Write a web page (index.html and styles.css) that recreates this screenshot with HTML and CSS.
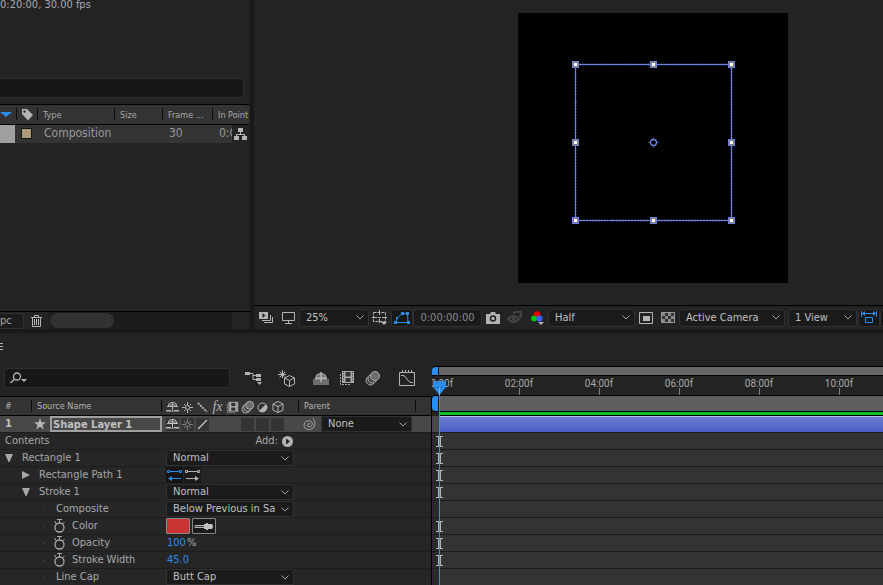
FILE: index.html
```html
<!DOCTYPE html>
<html lang="en">
<head>
  <meta charset="UTF-8">
  <meta name="viewport" content="width=device-width, initial-scale=1.0">
  <title>Shape Layer 1</title>
  <link rel="stylesheet" href="styles.css">
</head>
<body>
  <!-- shared icons -->
  <svg class="defs" aria-hidden="true">
    <symbol id="i-shy" viewBox="0 0 13 12">
      <path d="M2.500 5V3.500Q3 1.500 6.500 1.500T10.500 3.500V5M1 5.500h11M6.500 1v9" fill="none" stroke="currentColor"/>
      <path d="M3 3h7v3H3z" fill="currentColor" opacity=".5"/>
      <path d="M0 9h5v1h3V9h5v1.500H0z" fill="currentColor"/>
    </symbol>
    <symbol id="i-sun" viewBox="0 0 13 13">
      <circle cx="6.500" cy="6.500" r="2" fill="none" stroke="currentColor"/>
      <path d="M6.500 1v3M6.500 9v3M1 6.500h3M9 6.500h3M3 3l1.500 1.500M10 3L8.500 4.500M3 10l1.500-1.500M10 10L8.500 8.500" stroke="currentColor"/>
    </symbol>
    <symbol id="i-film" viewBox="0 0 16 16">
      <path d="M1.500 4v10.500H12" fill="none" stroke="currentColor" stroke-dasharray="2 1"/>
      <path d="M3 1h12v12H3z" fill="currentColor"/>
      <path d="M6.500 2h5v4.500h-5zM6.500 8h5v4h-5z" fill="#333"/>
      <path d="M4.500 2v10M13.500 2v10" stroke="#333" stroke-dasharray="1 1.500"/>
    </symbol>
    <symbol id="i-blur" viewBox="0 0 16 16">
      <circle cx="5.500" cy="10.500" r="4.500" fill="#444" stroke="currentColor"/>
      <circle cx="7.500" cy="8.500" r="4.500" fill="#444" stroke="currentColor"/>
      <circle cx="10" cy="6" r="4.500" fill="#6c6c6c" stroke="currentColor"/>
    </symbol>
    <symbol id="i-cube" viewBox="0 0 12 12">
      <path d="M6 .5l5 2.500v6L6 11.500 1 9V3zM1 3l5 2.500L11 3M6 5.500v6" fill="none" stroke="currentColor"/>
    </symbol>
    <symbol id="i-watch" viewBox="0 0 13 14">
      <circle cx="6.500" cy="8.500" r="4.500" fill="none" stroke="currentColor" stroke-width="1.300"/>
      <path d="M4 .5h5M6.500 1v3M1.500 2l2 3M11.500 3l-2 2" fill="none" stroke="currentColor"/>
    </symbol>
    <symbol id="i-down" viewBox="0 0 8 8"><path d="M0 0h8L4.500 8h-1z" fill="currentColor"/></symbol>
    <symbol id="i-right" viewBox="0 0 8 8"><path d="M0 0l8 4-8 4z" fill="currentColor"/></symbol>
    <symbol id="i-key" viewBox="0 0 7 11"><path d="M0 .5h7M0 10.500h7M2.500 1v9M4.500 1v9" stroke="#b4b4b4" fill="none"/></symbol>
  </svg>

  <main class="workspace">
    <section class="project">
      <p class="comp-info">0:20:00, 30.00 fps</p>
      <input class="project-search" type="text" aria-label="Search project">
      <table class="project-table">
        <colgroup>
          <col class="c-name"><col class="c-tag"><col class="c-type"><col class="c-size"><col class="c-rate"><col class="c-in"><col class="c-flow">
        </colgroup>
        <thead>
          <tr>
            <th class="sort"><svg width="12" height="5"><path d="M0 0h12L6 5z" fill="#2d8ceb"/></svg></th>
            <th class="tag"><svg width="13" height="13"><path d="M1 1h5l6 6-5 5.500L1 6z" fill="#b4b4b4"/><circle cx="3.500" cy="3.500" r="1.200" fill="#333"/></svg></th>
            <th>Type</th>
            <th>Size</th>
            <th>Frame ...</th>
            <th colspan="2">In Point</th>
          </tr>
        </thead>
        <tbody>
          <tr>
            <td class="picked"></td>
            <td class="tag"><span class="swatch"></span></td>
            <td>Composition</td>
            <td></td>
            <td>30</td>
            <td>0:00</td>
            <td class="flow"><svg width="13" height="12" fill="#b4b4b4"><path d="M4 0h5v4H4zM0 8h5v4H0zM8 8h5v4H8z"/><path d="M6 4h1v2h4v2h-1V7H3v1H2V6h4z"/></svg></td>
          </tr>
        </tbody>
      </table>
      <div class="project-foot">
        <button class="depth" type="button">pc</button>
        <button class="icon-btn trash" type="button" aria-label="Delete">
          <svg width="11" height="12"><path d="M0 2.500h11M3.500 2V.5h4V2M1.500 3v8.500h8V3M3.500 4v6M5.500 4v6M7.500 4v6" fill="none" stroke="#b4b4b4"/></svg>
        </button>
        <div class="scroll"><span class="thumb"></span></div>
      </div>
    </section>

    <section class="viewer">
      <div class="stage">
        <svg class="comp" width="270" height="270" shape-rendering="crispEdges">
          <rect width="270" height="270" fill="#000"/>
          <rect x="57.500" y="51.500" width="156" height="156" fill="none" stroke="#1c2140" stroke-width="3" stroke-dasharray="2 1"/>
          <rect x="57.500" y="51.500" width="156" height="156" fill="none" stroke="#6b82dc"/>
          <g class="handles">
            <rect x="54" y="48" width="7" height="7"/><rect x="132" y="48" width="7" height="7"/><rect x="210" y="48" width="7" height="7"/>
            <rect x="54" y="126" width="7" height="7"/><rect x="210" y="126" width="7" height="7"/>
            <rect x="54" y="204" width="7" height="7"/><rect x="132" y="204" width="7" height="7"/><rect x="210" y="204" width="7" height="7"/>
          </g>
          <path d="M55 49h5v5h-5zM133 49h5v5h-5zM211 49h5v5h-5zM55 127h5v5h-5zM211 127h5v5h-5zM55 205h5v5h-5zM133 205h5v5h-5zM211 205h5v5h-5z" fill="#8a8370"/>
          <path d="M56 50h3v3h-3zM134 50h3v3h-3zM212 50h3v3h-3zM56 128h3v3h-3zM212 128h3v3h-3zM56 206h3v3h-3zM134 206h3v3h-3zM212 206h3v3h-3z" fill="#fff"/>
          <g fill="none" stroke="#6b82dc" shape-rendering="auto">
            <circle cx="135.500" cy="129.500" r="3" stroke-width="1.300"/>
            <path d="M135.500 124v2M135.500 133v2M130 129.500h2M139 129.500h2" stroke="#46549a"/>
          </g>
        </svg>
      </div>
      <div class="viewer-bar">
        <button class="icon-btn" type="button" aria-label="Always preview this view"><svg width="14" height="12"><path d="M0 0h9v7H0z" fill="#b4b4b4"/><path d="M3.500 1l3 2.500-3 2.500z" fill="#232323"/><path d="M3 8.500h8.500V3M5 10.500h8.500V5" fill="none" stroke="#b4b4b4"/></svg></button>
        <button class="icon-btn" type="button" aria-label="Primary viewer"><svg width="13" height="12"><path d="M.5.5h12v8H.5zM6.500 9v2M3 11.500h7" fill="none" stroke="#b4b4b4"/></svg></button>
        <select class="field zoom" aria-label="Magnification"><option>25%</option></select>
        <button class="icon-btn" type="button" aria-label="Grid and guides"><svg width="16" height="15"><path d="M1.500 2.500h12v9H1.500z" fill="none" stroke="#b4b4b4" stroke-dasharray="3 1"/><path d="M7.500 0v5M7.500 9v4M0 7.500h5M10 7.500h5M6 7.500h3" stroke="#b4b4b4"/><path d="M9 12h6l-3 3z" fill="#b4b4b4"/></svg></button>
        <button class="icon-btn boxed" type="button" aria-label="Toggle mask visibility"><svg width="16" height="12"><path d="M1.500 10.500L3 6l5.500-4.500h5l.5 9z" fill="none" stroke="#2d8ceb"/><path d="M0 9h3v3H0zM13 9h3v3h-3zM12 0h3v3h-3zM7 0h3v3H7zM2 5h2v2H2z" fill="#2d8ceb"/></svg></button>
        <button class="field timecode" type="button">0:00:00:00</button>
        <button class="icon-btn" type="button" aria-label="Take snapshot"><svg width="14" height="12"><path d="M0 2h4l1-2h4l1 2h4v10H0z" fill="#b4b4b4"/><circle cx="7" cy="6.500" r="2.500" fill="#b4b4b4" stroke="#232323" stroke-width="1.500"/></svg></button>
        <button class="icon-btn" type="button" aria-label="Show snapshot"><svg width="16" height="13"><path d="M1 8q5-6 11 0-5 6-11 0z" fill="none" stroke="#444" stroke-width="2"/><circle cx="6.500" cy="8" r="2" fill="#444"/><path d="M6 2q4-2 8-1v5l-2-1" fill="none" stroke="#444" stroke-width="2"/></svg></button>
        <button class="icon-btn" type="button" aria-label="Show channel"><svg width="13" height="14"><circle cx="6" cy="3.500" r="3.300" fill="#f00000"/><circle cx="3" cy="7.500" r="3" fill="#00c800"/><circle cx="8.500" cy="7.500" r="3" fill="#3c64ff"/><path d="M7 11h6l-3 3z" fill="#b4b4b4"/></svg></button>
        <select class="field res" aria-label="Resolution"><option>Half</option></select>
        <button class="icon-btn" type="button" aria-label="Region of interest"><svg width="14" height="12"><path d="M.5.5h13v11H.5z" fill="none" stroke="#b4b4b4"/><path d="M4 4h7v5H4z" fill="#b4b4b4"/></svg></button>
        <button class="icon-btn" type="button" aria-label="Toggle transparency grid"><svg width="14" height="11"><path d="M.5.5h13v10H.5z" fill="#333" stroke="#9a9a9a"/><path d="M1 1h3v3H1zM7 1h3v3H7zM4 4h3v3H4zM10 4h3v3h-3zM1 7h3v3H1zM7 7h3v3H7z" fill="#888"/></svg></button>
        <select class="field camera" aria-label="3D view"><option>Active Camera</option></select>
        <select class="field views" aria-label="View layout"><option>1 View</option></select>
        <button class="icon-btn boxed" type="button" aria-label="Pixel aspect ratio"><svg width="16" height="13"><path d="M1 2.500h14M.5 0v6M15.500 0v6M4.500 6.500h7v5h-7z" fill="none" stroke="#2d8ceb"/><path d="M1 2.500L4 0v5zM15 2.500L12 0v5z" fill="#2d8ceb"/></svg></button>
        <button class="icon-btn boxed" type="button" aria-label="Fast previews"></button>
      </div>
    </section>
  </main>

  <section class="timeline">
    <div class="layers">
      <div class="tab-strip">
        <button class="icon-btn" type="button" aria-label="Panel menu"><svg width="3" height="7"><path d="M0 .5h3M0 3.500h3M0 6.500h3" stroke="#b4b4b4"/></svg></button>
      </div>
      <div class="tools">
        <label class="search">
          <svg width="18" height="12"><circle cx="7" cy="4.500" r="3.500" fill="none" stroke="#b4b4b4" stroke-width="1.300"/><path d="M4.500 7L.5 11" stroke="#b4b4b4" stroke-width="1.500"/><path d="M11 7h6l-3 3z" fill="#b4b4b4"/></svg>
          <input type="text" aria-label="Search layers">
        </label>
        <button class="icon-btn" type="button" aria-label="Mini-flowchart"><svg width="17" height="14"><path d="M0 1h5v3H0zM11 3h5v3h-5zM11 7h5v3h-5z" fill="#b4b4b4"/><path d="M5 2.500h3v6h3M8 4.500h3" fill="none" stroke="#b4b4b4"/><path d="M12 11h5l-2.500 3z" fill="#b4b4b4"/></svg></button>
        <button class="icon-btn" type="button" aria-label="Draft 3D"><svg width="18" height="17" fill="none" stroke="#b4b4b4"><path d="M11.500 5.500l5 2.500v6l-5 2.500-5-2.500V8zM6.500 8l5 2.500 5-2.500M11.500 10.500v6"/><circle cx="4.500" cy="4.500" r="1.500" fill="#b4b4b4"/><path d="M4.500 0v8M0 4.500h8M1.500 1.500l5 5M7.500 1.500l-6 6"/></svg></button>
        <button class="icon-btn" type="button" aria-label="Hide shy layers"><svg width="16" height="13"><path d="M0 7h16v6H0z" fill="#6e6e6e"/><path d="M3 6V4.500Q3.500 1.500 8 1.500T13 4.500V6z" fill="#777" stroke="#b4b4b4"/><path d="M8 0v10M2 6.500h12" fill="none" stroke="#b4b4b4" stroke-width="1.500"/></svg></button>
        <button class="icon-btn slim" type="button" aria-label="Frame blending"><svg width="16" height="16"><use href="#i-film"/></svg></button>
        <button class="icon-btn" type="button" aria-label="Motion blur"><svg width="16" height="16"><use href="#i-blur"/></svg></button>
        <button class="icon-btn" type="button" aria-label="Graph editor"><svg width="16" height="16"><path d="M.5 2.500h15v13H.5zM3.500 0v2M6.500 0v2M9.500 0v2M12.500 0v2M2 5.500h2q2 0 4 3.500t4 3.500h2" fill="none" stroke="#b4b4b4"/></svg></button>
      </div>

      <div class="cols head">
        <span class="num">#</span>
        <span class="name">Source Name</span>
        <span class="switches">
          <svg width="13" height="12"><use href="#i-shy"/></svg>
          <svg width="13" height="13"><use href="#i-sun"/></svg>
          <svg width="11" height="11"><path d="M1 1l9 9" stroke="currentColor" stroke-width="2" stroke-dasharray="2 1"/></svg>
          <i class="fx">fx</i>
          <svg width="13" height="13"><use href="#i-film"/></svg>
          <svg width="14" height="14"><use href="#i-blur"/></svg>
          <svg width="11" height="11"><circle cx="5.500" cy="5.500" r="4.500" fill="none" stroke="currentColor"/><path d="M9 2a5 5 0 0 1-7 7z" fill="currentColor"/></svg>
          <svg width="12" height="12"><use href="#i-cube"/></svg>
        </span>
        <span class="parent">Parent</span>
      </div>

      <div class="cols layer">
        <span class="num">1</span>
        <svg class="star" width="12" height="12"><path d="M6 0l1.500 4.300H12L8.400 7l1.400 4.500L6 8.800l-3.800 2.700L3.600 7 0 4.300h4.500z" fill="currentColor"/></svg>
        <input class="layer-name" type="text" value="Shape Layer 1" aria-label="Layer name">
        <span class="switches">
          <b><svg width="13" height="12"><use href="#i-shy"/></svg></b>
          <b class="dim"><svg width="13" height="13"><use href="#i-sun"/></svg></b>
          <b><svg width="11" height="11"><path d="M1 10l9-9" stroke="currentColor" stroke-width="1.500"/></svg></b>
          <b class="none"></b>
          <b class="none"></b>
          <b></b>
          <b></b>
          <b></b>
        </span>
        <span class="pick">
          <svg width="13" height="12"><path d="M7 6q-1-1-2 0t0 2.500q2 1 3.500-.5t.5-4q-2-2-5-1t-3 4q0 4 4.500 4.500 6 0 6.500-6 0-3-2-5" fill="none" stroke="#a0a0a0"/></svg>
        </span>
        <select class="drop parent-drop" aria-label="Parent"><option>None</option></select>
      </div>

      <div class="prop"><span class="label">Contents</span><span class="add">Add:<button class="icon-btn" type="button" aria-label="Add"><svg width="11" height="11"><circle cx="5.500" cy="5.500" r="5.500" fill="#b4b4b4"/><path d="M4 2.500l4 3-4 3z" fill="#232323"/></svg></button></span></div>
      <div class="prop"><span class="label"><svg width="8" height="8"><use href="#i-down"/></svg>Rectangle 1</span><select class="drop" aria-label="Rectangle 1 mode"><option>Normal</option></select></div>
      <div class="prop l2"><span class="label"><svg width="8" height="8"><use href="#i-right"/></svg>Rectangle Path 1</span>
        <button class="dir on" type="button" aria-label="Path direction"><svg width="15" height="11"><path d="M.5.5h2v2h-2zM12.500.5h2v2h-2zM3 1.500h9M3 8.500h11" fill="none" stroke="currentColor"/><path d="M1 8.500L5 6v5z" fill="currentColor"/></svg></button>
        <button class="dir" type="button" aria-label="Reverse path direction"><svg width="15" height="11"><path d="M.5.5h2v2h-2zM12.500.5h2v2h-2zM3 1.500h9M1 8.500h11" fill="none" stroke="currentColor"/><path d="M14 8.500L10 6v5z" fill="currentColor"/></svg></button>
      </div>
      <div class="prop l2"><span class="label"><svg width="8" height="8"><use href="#i-down"/></svg>Stroke 1</span><select class="drop" aria-label="Stroke 1 mode"><option>Normal</option></select></div>
      <div class="prop l3"><span class="label">Composite</span><select class="drop" aria-label="Composite"><option>Below Previous in Sa</option></select></div>
      <div class="prop l3"><span class="label"><svg width="13" height="14"><use href="#i-watch"/></svg>Color</span>
        <button class="chip color" type="button" aria-label="Stroke color"></button>
        <button class="chip" type="button" aria-label="Eyedropper"><svg width="20" height="7"><path d="M1 2.500h10v2H1L0 3.500z" fill="#444" stroke="#b4b4b4"/><path d="M10 1h2V0h2v1h4q2 2.500 0 5h-4v1h-2V6h-2z" fill="#c0c0c0"/></svg></button>
      </div>
      <div class="prop l3"><span class="label"><svg width="13" height="14"><use href="#i-watch"/></svg>Opacity</span><a class="value" href="#opacity">100</a><span class="unit">%</span></div>
      <div class="prop l3"><span class="label"><svg width="13" height="14"><use href="#i-watch"/></svg>Stroke Width</span><a class="value" href="#stroke-width">45.0</a></div>
      <div class="prop l3"><span class="label">Line Cap</span><select class="drop" aria-label="Line cap"><option>Butt Cap</option></select></div>
    </div>

    <div class="time">
      <div class="navigator"></div>
      <div class="ruler">
        <span>00:00f</span><span>02:00f</span><span>04:00f</span><span>06:00f</span><span>08:00f</span><span>10:00f</span>
      </div>
      <div class="work-area"></div>
      <div class="cache"></div>
      <div class="track bar"></div>
      <div class="track"><svg width="7" height="11"><use href="#i-key"/></svg></div>
      <div class="track"><svg width="7" height="11"><use href="#i-key"/></svg></div>
      <div class="track"><svg width="7" height="11"><use href="#i-key"/></svg></div>
      <div class="track"><svg width="7" height="11"><use href="#i-key"/></svg></div>
      <div class="track"></div>
      <div class="track"><svg width="7" height="11"><use href="#i-key"/></svg></div>
      <div class="track"><svg width="7" height="11"><use href="#i-key"/></svg></div>
      <div class="track"><svg width="7" height="11"><use href="#i-key"/></svg></div>
      <div class="track last"></div>
      <div class="playhead"><svg width="13" height="14"><path d="M0 0h13v6L6.500 14 0 6z" fill="#2d8ceb"/><path d="M4 6.500h1M8 6.500h1" stroke="#15406d"/><path d="M6.500 7v7" stroke="#7dbaf5"/></svg></div>
    </div>
  </section>
</body>
</html>
```
FILE: styles.css
```css
* {
  box-sizing: border-box;
}
body {
  margin: 0;
  height: 100vh;
  display: flex;
  flex-direction: column;
  gap: 4px;
  overflow: hidden;
  background: #191919;
  color: #a8a8a8;
  font: 11px/16px "DejaVu Sans Condensed", "DejaVu Sans", sans-serif;
}
button, input, select {
  margin: 0;
  padding: 0;
  border: 0;
  background: none;
  color: inherit;
  font: inherit;
}
svg {
  display: block;
  flex: none;
}
.defs {
  position: absolute;
  width: 0;
  height: 0;
}
.icon-btn {
  display: flex;
  align-items: center;
  justify-content: center;
}

/* project panel */
.workspace {
  flex: 1;
  min-height: 0;
  display: flex;
  gap: 4px;
}
.project {
  width: 250px;
  display: flex;
  flex-direction: column;
  background: #232323;
  overflow: hidden;
}
.comp-info {
  margin: 0;
  height: 78px;
  line-height: 10px;
}
.project-search {
  height: 20px;
  margin-right: 6px;
  background: #171717;
  border: 1px solid #303030;
  border-left: 0;
  border-radius: 0 3px 3px 0;
}
.project-table {
  width: 249px;
  margin-top: 6px;
  table-layout: fixed;
  border-collapse: collapse;
}
.c-name { width: 17px; }
.c-tag { width: 21px; }
.c-type { width: 77px; }
.c-size { width: 48px; }
.c-rate { width: 50px; }
.c-in { width: 19px; }
.project-table th {
  height: 20px;
  padding: 0 0 0 5px;
  background: #333 linear-gradient(#0c0c0c, #0c0c0c) right 3px / 1px 12px no-repeat;
  border-top: 1px solid #000;
  border-bottom: 1px solid #000;
  text-align: left;
  font-size: 9px;
  font-weight: normal;
  line-height: 12px;
  white-space: nowrap;
  overflow: hidden;
}
.project-table th:last-child {
  background-image: none;
}
.project-table th.sort {
  padding: 0;
}
.project-table th.tag {
  padding-left: 4px;
}
.project-table td {
  height: 18px;
  padding: 0 0 0 6px;
  background: #343434;
  color: #989898;
  font-size: 12px;
  line-height: 17px;
  white-space: nowrap;
  overflow: hidden;
}
.project-table td.tag {
  padding-left: 4px;
}
.project-table .picked {
  background: linear-gradient(to right, #a0a0a0 15px, #343434 15px);
}
.project-table td.flow {
  padding: 0 0 0 2px;
  background: #232323;
}
.swatch {
  display: block;
  width: 11px;
  height: 11px;
  background: #ae9b76;
  border: 1px solid #161616;
}
.project-foot {
  margin-top: auto;
  height: 18px;
  display: flex;
  align-items: center;
  background: #232323;
  border-top: 1px solid #000;
}
.depth {
  width: 24px;
  height: 16px;
  line-height: 14px;
  text-align: left;
  border: 1px solid #303030;
  border-left: 0;
  border-radius: 0 3px 3px 0;
  background: #1c1c1c;
}
.trash {
  width: 25px;
}
.scroll {
  width: 183px;
  height: 17px;
  background: #1c1c1c;
}
.thumb {
  display: block;
  width: 64px;
  height: 15px;
  margin: 1px;
  border-radius: 8px;
  background: #323232;
}

/* composition viewer */
.viewer {
  flex: 1;
  min-width: 0;
  display: flex;
  flex-direction: column;
  background: #232323;
}
.stage {
  flex: 1;
  min-height: 0;
  display: flex;
  justify-content: flex-end;
  padding: 13px 95px 0 0;
}
.handles rect {
  fill: #6b82dc;
}
.viewer-bar {
  height: 24px;
  padding-left: 1px;
  display: flex;
  align-items: center;
  overflow: hidden;
  border-top: 1px solid #000;
  color: #c0c0c0;
}
.viewer-bar .icon-btn {
  flex: none;
  width: 22px;
  height: 18px;
}
.boxed {
  background: #171717;
  border: 1px solid #303030;
  border-radius: 3px;
}
.field {
  flex: none;
  height: 18px;
  padding-left: 6px;
  border: 1px solid #303030;
  border-radius: 3px;
  background-color: #1b1b1b;
}
select {
  appearance: none;
  background-image: url("data:image/svg+xml,%3Csvg xmlns='http://www.w3.org/2000/svg' width='8' height='5'%3E%3Cpath d='M.5.5L4 4 7.500.5' fill='none' stroke='%23a0a0a0'/%3E%3C/svg%3E");
  background-repeat: no-repeat;
  background-position: right 4px center;
}
.zoom { width: 70px; }
.timecode {
  width: 69px;
  padding: 0;
  color: #888;
}
.res { width: 87px; }
.camera { width: 106px; }
.views {
  width: 69px;
  margin: 0 1px 0 3px;
}

/* timeline, layer side */
.timeline {
  flex: none;
  display: flex;
  background: #232323;
}
.layers {
  width: 432px;
  flex: none;
}
.tab-strip {
  height: 27px;
  display: flex;
  align-items: center;
}
.tools {
  height: 36px;
  padding-left: 4px;
  display: flex;
  align-items: center;
}
.tools .icon-btn {
  width: 34px;
}
.tools .slim {
  width: 18px;
}
.search {
  width: 226px;
  height: 20px;
  margin-right: 6px;
  padding-left: 5px;
  display: flex;
  align-items: center;
  background: #171717;
  border: 1px solid #303030;
  border-radius: 3px;
}
.search input {
  flex: 1;
  min-width: 0;
}
.cols {
  display: flex;
  align-items: center;
  border-right: 1px solid #000;
}
.head {
  height: 20px;
  background: #333;
  border-top: 1px solid #000;
  border-bottom: 1px solid #000;
  font-size: 9px;
  line-height: 12px;
  color: #b4b4b4;
}
.head .num, .head .name, .head .switches, .head .parent {
  border-right: 1px solid #0c0c0c;
}
.num {
  width: 32px;
  padding-left: 5px;
}
.name {
  width: 130px;
  padding-left: 5px;
}
.switches {
  width: 137px;
  padding-left: 3px;
  display: grid;
  grid-template-columns: repeat(8, 15px);
  align-items: center;
  justify-items: center;
}
.head .switches {
  height: 12px;
}
.fx {
  font: italic 14px/12px "Liberation Serif", serif;
}
.parent {
  width: 117px;
  padding-left: 5px;
}
.layer {
  height: 17px;
  background: #484848;
  border-bottom: 1px solid #1d1d1d;
  color: #c0c0c0;
}
.layer .num {
  width: 34px;
  font-weight: bold;
}
.star {
  color: #b4b4b4;
}
.layer-name {
  width: 112px;
  height: 16px;
  margin-left: 4px;
  padding-left: 1px;
  border: 2px solid #a0a0a0;
  font-size: 11px;
  font-weight: bold;
  line-height: 12px;
}
.switches b {
  width: 13px;
  height: 13px;
  display: flex;
  align-items: center;
  justify-content: center;
  background: #343434;
}
.switches b.none {
  background: none;
}
.switches b.dim {
  color: #808080;
}
.pick {
  width: 22px;
  padding-left: 4px;
}
.drop {
  width: 128px;
  height: 16px;
  padding: 0 14px 0 6px;
  border: 1px solid #303030;
  background-color: #1b1b1b;
  color: #c0c0c0;
  line-height: 14px;
}
.parent-drop {
  width: 91px;
}
.prop {
  height: 17px;
  display: flex;
  align-items: center;
  border-right: 1px solid #000;
  border-bottom: 1px solid #1d1d1d;
  background: #262626;
}
.prop:last-child {
  height: 16px;
  border-bottom: 0;
}
.label {
  width: 166px;
  padding-left: 5px;
  display: flex;
  align-items: center;
  gap: 9px;
  white-space: nowrap;
}
.l3 .label {
  gap: 6px;
}
.l2 .label {
  padding-left: 22px;
}
.l3 .label {
  padding-left: 43px;
}
.l3 .label::before {
  content: "";
  width: 1px;
  height: 1px;
  margin-right: 6px;
  background: #505050;
}
.l3 .label:has(svg)::before {
  margin-right: 3px;
}
.add {
  margin-left: auto;
  padding-right: 138px;
  display: flex;
  align-items: center;
  gap: 4px;
}
.dir {
  width: 17px;
  height: 16px;
  margin-right: 1px;
  display: flex;
  align-items: center;
  justify-content: center;
  background: #1b1b1b;
  color: #b4b4b4;
}
.dir.on {
  background: #141414;
  color: #2d8ceb;
}
.chip {
  width: 24px;
  height: 16px;
  margin-right: 2px;
  display: flex;
  align-items: center;
  justify-content: center;
  border: 1px solid #8a8a8a;
  border-radius: 1px;
  background: #1b1b1b;
}
.chip.color {
  background: #c83434;
}
.value {
  padding-left: 1px;
  color: #2d8ceb;
  text-decoration: none;
}
.unit {
  padding-left: 1px;
}

/* timeline, time side */
.time {
  position: relative;
  flex: 1;
  min-width: 0;
  padding-top: 33px;
  overflow: hidden;
}
.navigator {
  height: 10px;
  border-top: 1px solid #000;
  border-bottom: 1px solid #000;
  border-radius: 4px 0 0 0;
  background: linear-gradient(to right, #2d8ceb 6px, #111 6px, #111 7px, #666 7px);
}
.ruler {
  height: 19px;
  margin-left: -33px;
  display: flex;
  overflow: hidden;
}
.ruler span {
  flex: none;
  width: 80px;
  padding-top: 2px;
  text-align: center;
  font: 10px/12px Roboto, sans-serif;
  background: linear-gradient(#808080, #808080) center bottom / 1px 7px no-repeat;
}
.work-area {
  height: 17px;
  border-top: 1px solid #000;
  border-bottom: 1px solid #000;
  border-radius: 4px 0 0 4px;
  background: linear-gradient(to right, #2d8ceb 6px, #111 6px, #111 7px, #5f5f5f 7px);
}
.cache {
  height: 4px;
  margin-left: 7px;
  background: #12c022;
  border-bottom: 1px solid #000;
}
.track {
  height: 17px;
  padding-left: 4px;
  display: flex;
  align-items: center;
  border-bottom: 1px solid #1d1d1d;
  background: linear-gradient(to right, #2a2a2a 7px, #333 7px);
}
.track.bar {
  background: linear-gradient(to right, #484848 7px, transparent 7px), linear-gradient(#b4bce8 1px, #6c7dd2 1px, #4a5ec4);
}
.track.last {
  height: 16px;
  border-bottom: 0;
}
.playhead {
  position: absolute;
  top: 48px;
  bottom: 0;
  left: 1px;
  width: 13px;
  background: linear-gradient(#3c8ce0, #3c8ce0) center / 1px 100% no-repeat;
}
```
